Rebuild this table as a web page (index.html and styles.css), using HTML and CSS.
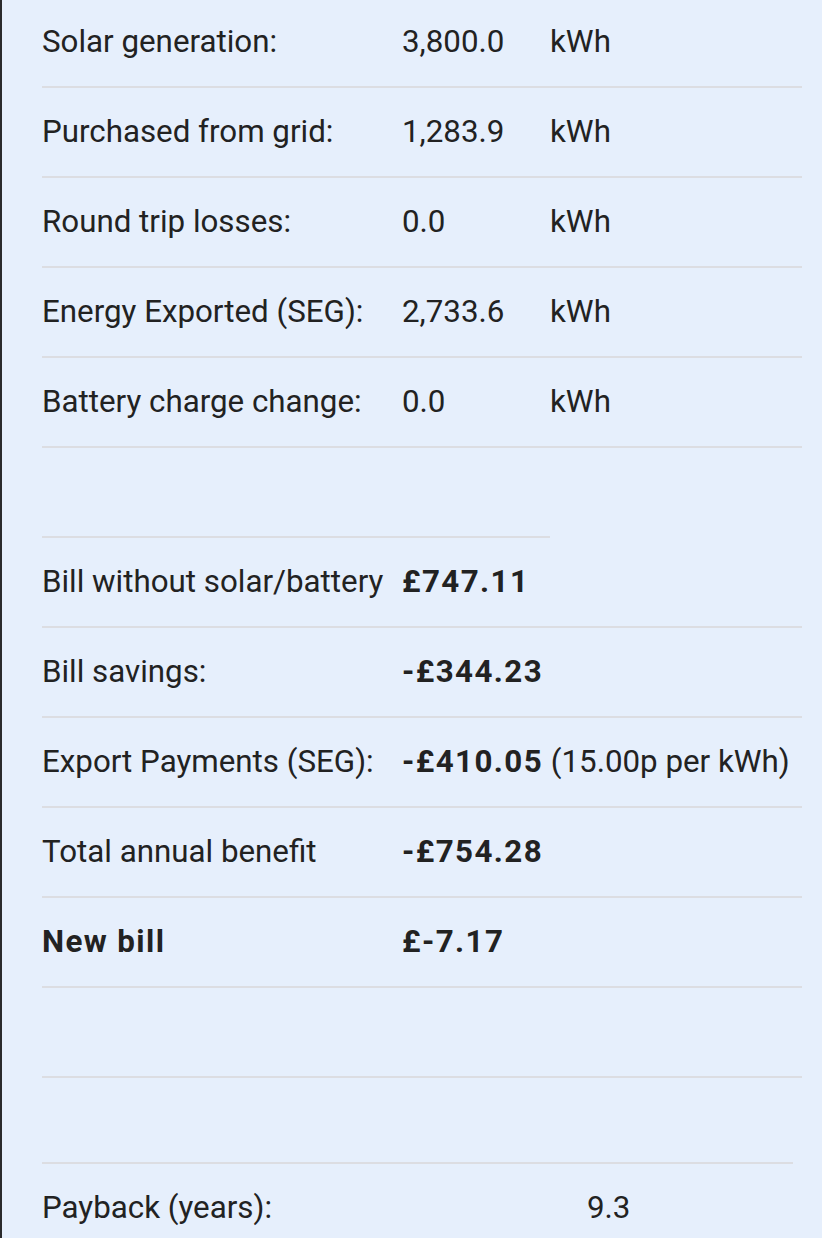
FILE: index.html
```html
<!DOCTYPE html>
<html>
<head>
<meta charset="utf-8">
<link rel="stylesheet" href="styles.css">
</head>
<body>
<div class="panel">
  <div class="rows energy">
    <div class="row"><span class="label">Solar generation:</span><span class="val">3,800.0</span><span class="unit">kWh</span></div>
    <div class="row"><span class="label">Purchased from grid:</span><span class="val">1,283.9</span><span class="unit">kWh</span></div>
    <div class="row"><span class="label">Round trip losses:</span><span class="val">0.0</span><span class="unit">kWh</span></div>
    <div class="row"><span class="label">Energy Exported (SEG):</span><span class="val">2,733.6</span><span class="unit">kWh</span></div>
    <div class="row"><span class="label">Battery charge change:</span><span class="val">0.0</span><span class="unit">kWh</span></div>
    <div class="row spacer short"></div>
  </div>
  <div class="rows money">
    <div class="row"><span class="label">Bill without solar/battery</span><span class="val b">£747.11</span></div>
    <div class="row"><span class="label">Bill savings:</span><span class="val b">-£344.23</span></div>
    <div class="row"><span class="label">Export Payments (SEG):</span><span class="val"><b class="b">-£410.05</b> (15.00p per kWh)</span></div>
    <div class="row"><span class="label">Total annual benefit</span><span class="val b">-£754.28</span></div>
    <div class="row"><span class="label b">New bill</span><span class="val b">£-7.17</span></div>
    <div class="row spacer"></div>
  </div>
  <div class="rows payback">
    <div class="row pb"><span class="label">Payback (years):</span><span class="val">9.3</span></div>
  </div>
</div>
</body>
</html>
```

FILE: styles.css
```css
html, body {
  margin: 0;
  padding: 0;
  background: #e6effc;
}
body {
  font-family: Roboto, "Liberation Sans", sans-serif;
  color: #222222;
  font-size: 31.3px;
}
.panel {
  border-left: 2px solid #2a2a2c;
  min-height: 1238px;
  box-sizing: border-box;
  padding-left: 40px;
  padding-right: 20px;
  margin-top: -2px;
}
.row {
  display: flex;
  align-items: center;
  height: 88px;
  padding-bottom: 2px;
  box-sizing: border-box;
  height: 90px;
  border-bottom: 2px solid #dcdde2;
  white-space: nowrap;
}
.label {
  width: 360px;
  flex: none;
}
.val {
  width: 148px;
  flex: none;
}
.money .val {
  width: auto;
}
.b {
  font-weight: 700;
  letter-spacing: 1.4px;
}
.spacer.short {
  width: 508px;
}
.payback {
  margin-top: 84px;
  margin-right: 9px;
  border-top: 2px solid #dcdde2;
}
.row.pb {
  border-bottom: none;
  height: 88px;
}
.pb .label {
  width: 545px;
}
```
